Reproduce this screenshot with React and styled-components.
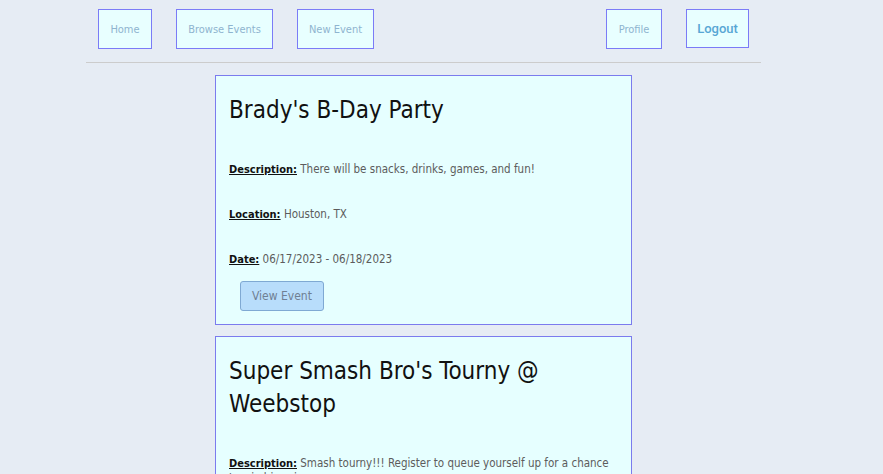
import React from 'react';
import styled, { createGlobalStyle } from 'styled-components';

const GlobalStyle = createGlobalStyle`
  body {
    margin: 0;
    background: #e6ecf4;
    font-family: "DejaVu Sans Condensed", "Liberation Sans Narrow", sans-serif;
  }
`;

const Page = styled.div`
  width: 847px;
`;

const Nav = styled.nav`
  width: 675px;
  margin: 0 auto;
  display: flex;
  justify-content: space-between;
  align-items: flex-start;
  padding-top: 9px;
  padding-bottom: 13px;
  border-bottom: 1px solid #cccccc;
`;

const NavGroup = styled.div`
  display: flex;
`;

const NavBtn = styled.a`
  display: flex;
  align-items: center;
  justify-content: center;
  box-sizing: border-box;
  height: ${p => (p.$bold ? '39px' : '40px')};
  width: ${p => p.$w}px;
  margin: 0 12px;
  background: #e8ffff;
  border: 1px solid #7b7bf7;
  color: ${p => (p.$bold ? '#58a6d4' : '#8fb4cf')};
  font-family: ${p => (p.$bold ? 'Roboto, "Liberation Sans", sans-serif' : 'inherit')};
  font-size: ${p => (p.$bold ? '13px' : '11px')};
  font-weight: ${p => (p.$bold ? 500 : 400)};
  text-decoration: none;
  cursor: pointer;
`;

const List = styled.main`
  display: flex;
  flex-direction: column;
  align-items: center;
  gap: 11px;
  padding-top: 12px;
`;

const Card = styled.section`
  box-sizing: border-box;
  width: 417px;
  background: #e6ffff;
  border: 1px solid #7b7bee;
  padding: 18px 13px 13px;
`;

const Title = styled.h2`
  margin: 0 0 35px;
  font-size: 24px;
  font-weight: 400;
  line-height: 33px;
  color: #111;
`;

const Field = styled.p`
  margin: 0 0 30px;
  font-size: 11.5px;
  line-height: 15px;
  color: #5c5c5c;
`;

const Label = styled.span`
  color: #111;
  font-weight: 700;
  font-size: 11px;
  text-decoration: underline;
`;

const ViewBtn = styled.button`
  display: block;
  margin: -16px 0 0 11px;
  height: 30px;
  padding: 0 11px;
  background: #b8ddfb;
  border: 1px solid #7fa9d3;
  border-radius: 3px;
  color: #6f7f93;
  font-family: inherit;
  font-size: 12px;
  cursor: pointer;
`;

const events = [
  {
    title: "Brady's B-Day Party",
    description: 'There will be snacks, drinks, games, and fun!',
    location: 'Houston, TX',
    date: '06/17/2023 - 06/18/2023',
  },
  {
    title: "Super Smash Bro's Tourny @ Weebstop",
    description: 'Smash tourny!!! Register to queue yourself up for a chance to win big prizes.',
    location: 'Houston, TX',
    date: '06/24/2023 - 06/24/2023',
  },
];

export default function App() {
  return (
    <Page>
      <GlobalStyle />
      <Nav>
        <NavGroup>
          <NavBtn $w={54}>Home</NavBtn>
          <NavBtn $w={97}>Browse Events</NavBtn>
          <NavBtn $w={77}>New Event</NavBtn>
        </NavGroup>
        <NavGroup>
          <NavBtn $w={56}>Profile</NavBtn>
          <NavBtn $w={63} $bold>Logout</NavBtn>
        </NavGroup>
      </Nav>
      <List>
        {events.map(ev => (
          <Card key={ev.title}>
            <Title>{ev.title}</Title>
            <Field><Label>Description:</Label> {ev.description}</Field>
            <Field><Label>Location:</Label> {ev.location}</Field>
            <Field><Label>Date:</Label> {ev.date}</Field>
            <ViewBtn>View Event</ViewBtn>
          </Card>
        ))}
      </List>
    </Page>
  );
}
